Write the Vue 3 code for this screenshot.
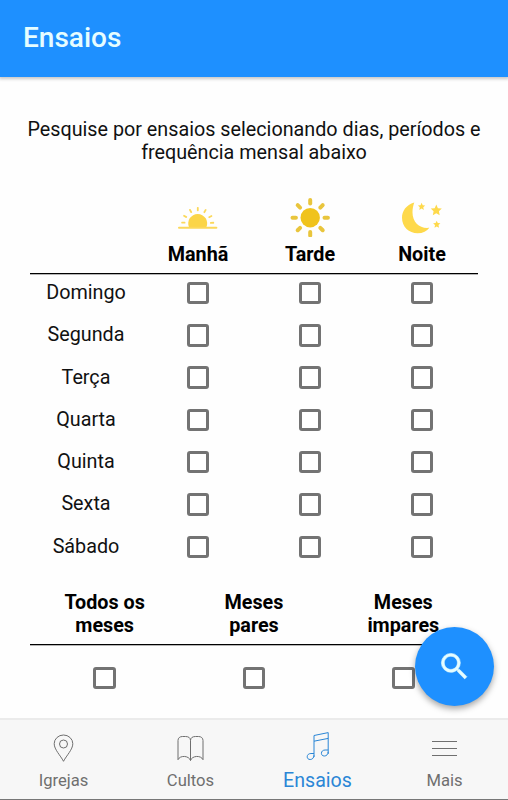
<script setup>
import { ref, reactive } from "vue";

const periods = ["Manhã", "Tarde", "Noite"];
const days = ["Domingo", "Segunda", "Terça", "Quarta", "Quinta", "Sexta", "Sábado"];
const months = ["Todos os meses", "Meses pares", "Meses impares"];
const tabs = ["Igrejas", "Cultos", "Ensaios", "Mais"];

const activeTab = ref("Ensaios");
const selected = reactive({});
const rays = [0, 45, 90, 135, 180, 225, 270, 315];
const dawnRays = [-87, -61, -30, 0, 30, 61, 87];
</script>

<template>
  <div class="screen">
    <header class="toolbar">
      <h1>Ensaios</h1>
    </header>

    <main class="content">
      <p class="intro">
        Pesquise por ensaios selecionando dias, períodos e frequência mensal abaixo
      </p>

      <div class="row head">
        <div class="cell"></div>
        <div v-for="period in periods" :key="period" class="cell">
          <svg v-if="period === 'Manhã'" class="weather" viewBox="0 0 40 40" fill="#fbd85a">
            <path d="M11.100 30.500a9.500 9.500 0 1 1 17.200 0z" fill="#fbd548" />
            <rect x="0" y="29.700" width="39.400" height="2.100" rx="1" />
            <rect
              v-for="angle in dawnRays"
              :key="angle"
              x="18.900"
              y="10"
              width="1.800"
              height="4.200"
              rx="0.700"
              :transform="`rotate(${angle} 19.700 26.500)`"
            />
          </svg>
          <svg v-else-if="period === 'Tarde'" class="weather" viewBox="0 0 40 40" fill="#f0c31c">
            <circle cx="20.200" cy="20.700" r="9.700" />
            <rect
              v-for="angle in rays"
              :key="angle"
              x="18.200"
              y="1"
              width="4"
              height="7.400"
              rx="2"
              fill="#e9c53c"
              :transform="`rotate(${angle} 20.200 20.700)`"
            />
          </svg>
          <svg v-else class="weather" viewBox="0 0 40 40" fill="#fed94b">
            <path d="M12.300 5.500C4 8 0 14 0 20.800 0 30 7 36.300 15.500 36.300c5.500 0 9.500-2 11.800-5.500C18 32 10.500 25.500 10.500 15.500c0-4 .7-7 1.800-10z" />
            <path transform="translate(-0.4 1.1)" d="M20 4.700l1.100 2.400 2.500.3-1.900 1.800.5 2.600-2.200-1.300-2.300 1.300.500-2.600-1.900-1.800 2.600-.3z" />
            <path transform="translate(0 0.8)" d="M34.300 6.800l1.600 3.600 3.900.4-2.900 2.700.8 3.900-3.400-2-3.500 2 .8-3.900-2.900-2.700 4-.4z" />
            <path transform="translate(0 1.300)" d="M34.700 22.400l1.100 2.300 2.600.3-1.900 1.800.5 2.600-2.300-1.300-2.200 1.300.5-2.600-1.900-1.800 2.500-.3z" />
          </svg>
          <strong>{{ period }}</strong>
        </div>
      </div>

      <div v-for="day in days" :key="day" class="row day">
        <div class="cell"><span class="label">{{ day }}</span></div>
        <div v-for="period in periods" :key="period" class="cell">
          <input v-model="selected[day + period]" type="checkbox" class="check" />
        </div>
      </div>

      <div class="months head">
        <div v-for="month in months" :key="month" class="cell">
          <strong>{{ month }}</strong>
        </div>
      </div>
      <div class="months options">
        <div v-for="month in months" :key="month" class="cell">
          <input v-model="selected[month]" type="checkbox" class="check" />
        </div>
      </div>
    </main>

    <button class="fab" aria-label="Pesquisar">
      <svg viewBox="0 0 24 24" fill="currentColor">
        <path d="M15.500 14h-.79l-.28-.27A6.470 6.470 0 0 0 16 9.500 6.500 6.500 0 1 0 9.500 16c1.610 0 3.090-.59 4.230-1.570l.27.28v.79l5 4.990L20.490 19l-4.990-5zm-6 0C7.010 14 5 11.990 5 9.500S7.010 5 9.500 5 14 7.010 14 9.500 11.990 14 9.500 14z" />
      </svg>
    </button>

    <nav class="tabbar">
      <button
        v-for="tab in tabs"
        :key="tab"
        class="tab"
        :class="{ active: tab === activeTab }"
        @click="activeTab = tab"
      >
        <svg viewBox="0 0 30 30" fill="none" stroke="currentColor">
          <template v-if="tab === 'Igrejas'">
            <path d="M14.500 28.300C11.500 22.500 5.200 16.500 5.200 10.700a9.300 8.700 0 0 1 18.600 0C23.800 16.500 17.500 22.500 14.500 28.300z" />
            <circle cx="14.500" cy="11" r="4" />
          </template>
          <template v-else-if="tab === 'Cultos'">
            <path d="M14.500 27.500c-1.500-5-10.500-5.500-12.500-.8V7.500c0-2.500 1.800-4 4.500-4h3c3 0 5 1.300 5 4zM14.500 27.500c1.500-5 10.500-5.500 12.500-.8V7.500c0-2.500-1.800-4-4.500-4h-3c-3 0-5 1.300-5 4" />
          </template>
          <template v-else-if="tab === 'Ensaios'">
            <path d="M11 24V2.500L25.200-.4v21.300M11 8.200l14.200-2.800" />
            <path d="M11 22.300c0 2.500-1.700 4.200-3.800 4.200-2 0-3-1.200-3-2.700 0-2 1.600-3.300 3.700-3.300h3.100M25.200 18.800c0 2.500-1.700 4.200-3.800 4.200-2 0-3-1.200-3-2.700 0-2 1.600-3.300 3.700-3.300h3.100" />
          </template>
          <path v-else d="M2 8.500h25M2 15.500h25M2 22.500h25" />
        </svg>
        <span>{{ tab }}</span>
      </button>
    </nav>
  </div>
</template>

<style>
body {
  margin: 0;
  background: #fff;
}
</style>

<style scoped>
.screen {
  position: relative;
  display: flex;
  flex-direction: column;
  height: 800px;
  overflow: hidden;
  background: #fefefe;
  color: #111;
  font-family: Roboto, sans-serif;
  font-size: 19.75px;
  line-height: 22.5px;
}

.toolbar {
  display: flex;
  align-items: center;
  box-sizing: border-box;
  height: 77px;
  padding: 0 23px 2px;
  background: #1e90ff;
  box-shadow: 0 1px 3px 1px rgba(0, 0, 0, 0.22);
}

h1 {
  margin: 0;
  color: #e6fdff;
  font-size: 28px;
  font-weight: 500;
  line-height: 32px;
}

.content {
  flex: 1;
  padding: 42px 30px 0;
}

.intro {
  margin: 0 -10px;
  text-align: center;
}

.row {
  display: grid;
  grid-template-columns: repeat(4, 1fr);
}

.months {
  display: grid;
  grid-template-columns: repeat(3, 1fr);
}

.cell {
  display: flex;
  flex-direction: column;
  align-items: center;
  text-align: center;
}

.head {
  border-bottom: 1px solid #000;
  box-shadow: 0 1px 0 #b5b5b5;
  color: #000;
}

.row.head {
  height: 76px;
  margin-top: 33px;
}

.weather {
  width: 40px;
  height: 40px;
  margin-bottom: 6.5px;
}

strong {
  font-weight: 700;
}

.row.day {
  height: 42.3px;
}

.label {
  margin-top: 8px;
}

.day .check {
  margin-top: 7.8px;
}

.check {
  appearance: none;
  box-sizing: border-box;
  width: 22.5px;
  height: 22.5px;
  margin: 0;
  border: 3px solid #737373;
  border-radius: 3px;
  background: #fff;
}

.check:checked {
  background: #1e90ff;
}

.months.head {
  height: 52px;
  margin-top: 21px;
  padding-top: 1px;
}

.months strong {
  width: 90px;
}

.months.options {
  padding-top: 21.5px;
}

.fab {
  position: absolute;
  right: 14px;
  bottom: 94px;
  display: flex;
  align-items: center;
  justify-content: center;
  width: 79px;
  height: 79px;
  padding: 0;
  border: 0;
  border-radius: 50%;
  background: #1e90ff;
  color: #e6fdff;
  box-shadow: 0 3px 6px rgba(0, 0, 0, 0.35);
}

.fab svg {
  width: 35px;
  height: 35px;
  stroke: currentColor;
  stroke-width: 0.4;
}

.tabbar {
  display: grid;
  grid-template-columns: repeat(4, 1fr);
  box-sizing: border-box;
  height: 82px;
  border-top: 2px solid #ebebeb;
  border-bottom: 1px solid #777;
  background: #f7f7f7;
}

.tab {
  display: flex;
  flex-direction: column;
  align-items: center;
  padding: 13px 0 0;
  border: 0;
  background: none;
  color: #6f6f6f;
  font: 16.6px/22px Roboto, sans-serif;
}

.tab svg {
  width: 30px;
  height: 30px;
  margin-bottom: 7px;
  overflow: visible;
}

.tab.active {
  color: #2a86d6;
  font-size: 19.6px;
}
</style>
